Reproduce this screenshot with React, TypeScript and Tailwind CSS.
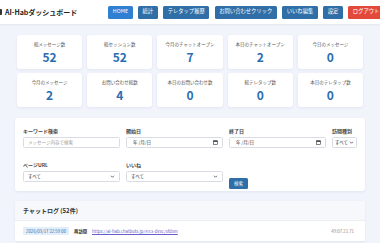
import React from 'react'

const navItems = [
  { label: 'HOME', active: true },
  { label: '統計' },
  { label: 'テレタップ履歴' },
  { label: 'お問い合わせクリック' },
  { label: 'いいね編集' },
  { label: '設定' },
]

const stats = [
  { label: '総メッセージ数', value: '52' },
  { label: '総セッション数', value: '52' },
  { label: '今月のチャットオープン', value: '7' },
  { label: '本日のチャットオープン', value: '2' },
  { label: '今日のメッセージ', value: '0' },
  { label: '今月のメッセージ', value: '2' },
  { label: 'お問い合わせ総数', value: '4' },
  { label: '本日のお問い合わせ数', value: '0' },
  { label: '総テレタップ数', value: '0' },
  { label: '本日のテレタップ数', value: '0' },
]

function Chevron() {
  return (
    <svg width="5" height="5" viewBox="0 0 10 10" className="shrink-0">
      <path d="M2 3.5 L5 6.5 L8 3.5" fill="none" stroke="#444" strokeWidth="1.6" />
    </svg>
  )
}

function CalendarIcon() {
  return (
    <svg width="5" height="5" viewBox="0 0 10 10" className="shrink-0">
      <rect x="1" y="1.5" width="8" height="7.5" fill="none" stroke="#333" strokeWidth="1.2" />
      <rect x="1" y="1.5" width="8" height="2.2" fill="#333" />
    </svg>
  )
}

function Label({ children }: { children: React.ReactNode }) {
  return <div className="text-[5px] leading-[7px] font-bold text-[#444] mb-[3px] whitespace-nowrap">{children}</div>
}

function SelectBox({ text, tight }: { text: string; tight?: boolean }) {
  return (
    <div
      className={`h-[11px] border border-[#d9dde3] rounded-[1.5px] bg-white flex items-center justify-between text-[4.5px] text-[#333] whitespace-nowrap ${
        tight ? 'px-[2px]' : 'px-[4px]'
      }`}
    >
      <span>{text}</span>
      <Chevron />
    </div>
  )
}

function DateBox() {
  return (
    <div className="h-[11px] border border-[#d9dde3] rounded-[1.5px] bg-white flex items-center justify-between px-[4px] text-[4.5px] text-[#333]">
      <span className="pl-[2px]">年 /月/日</span>
      <CalendarIcon />
    </div>
  )
}

export default function App() {
  return (
    <div className="w-[380px] h-[243px] overflow-hidden bg-[#f1f4fb] font-['Noto_Sans_CJK_JP','Noto_Sans',sans-serif]">
      <header className="h-[24px] bg-white shadow-[0_1px_2px_rgba(0,0,0,0.06)] flex items-center overflow-hidden">
        <div className="flex items-center shrink-0 -ml-[3px]">
          <span className="w-[5px] h-[6px] bg-[#333] rounded-[1px] mr-[3px]" />
          <h1 className="text-[7px] font-bold text-[#222] whitespace-nowrap">AI-Habダッシュボード</h1>
        </div>
        <nav className="flex items-center gap-[5.5px] ml-[31px] shrink-0">
          {navItems.map(item => (
            <button
              key={item.label}
              className={`h-[13px] px-[4.5px] rounded-[1.5px] text-[5.3px] text-white whitespace-nowrap ${
                item.active ? 'bg-[#2f7fd3]' : 'bg-[#2f6ea6]'
              }`}
            >
              {item.label}
            </button>
          ))}
          <button className="h-[13px] px-[4.5px] rounded-[1.5px] text-[5.3px] text-white whitespace-nowrap bg-[#e3493b]">
            ログアウト
          </button>
        </nav>
      </header>

      <main className="px-[17px] pt-[11px]">
        <div className="grid grid-cols-5 gap-x-[5px] gap-y-[4px]">
          {stats.map(s => (
            <div
              key={s.label}
              className="h-[34px] bg-white rounded-[3px] shadow-[0_1px_3px_rgba(40,60,120,0.08)] flex flex-col items-center pt-[6px]"
            >
              <div className="text-[4.5px] leading-[6px] text-[#555] whitespace-nowrap">{s.label}</div>
              <div className="text-[12px] leading-[16px] font-bold text-[#2a6db3] mt-[2px]">{s.value}</div>
            </div>
          ))}
        </div>

        <section className="mt-[11px] -mx-[2px] bg-white rounded-[3px] shadow-[0_1px_3px_rgba(40,60,120,0.08)] pl-[8px] pt-[9px] pb-[7px]">
          <div className="grid grid-cols-[97px_97px_97px_25px] gap-x-[6px] gap-y-[13px]">
            <div>
              <Label>キーワード検索</Label>
              <div className="h-[11px] border border-[#d9dde3] rounded-[1.5px] bg-white flex items-center px-[4px] text-[4.5px] text-[#999]">
                メッセージ内容で検索
              </div>
            </div>
            <div>
              <Label>開始日</Label>
              <DateBox />
            </div>
            <div>
              <Label>終了日</Label>
              <DateBox />
            </div>
            <div>
              <Label>訪問種別</Label>
              <SelectBox text="すべて" tight />
            </div>
            <div>
              <Label>ページURL</Label>
              <SelectBox text="すべて" />
            </div>
            <div>
              <Label>いいね</Label>
              <SelectBox text="すべて" />
            </div>
            <div className="flex items-end">
              <button className="h-[11px] px-[5px] rounded-[1.5px] bg-[#2f6ea6] text-white text-[4.5px] mb-[-7px]">
                検索
              </button>
            </div>
          </div>
          <div className="h-[2px]" />
        </section>

        <section className="mt-[10px] -mx-[2px] bg-white rounded-t-[3px] shadow-[0_1px_3px_rgba(40,60,120,0.08)] overflow-hidden">
          <div className="h-[20px] bg-[#f7f8fc] border-b border-[#eceef4] flex items-center px-[8px]">
            <h2 className="text-[6px] font-bold text-[#333]">チャットログ (52件)</h2>
          </div>
          <div className="h-[20px] flex items-center px-[8px] text-[4.3px]">
            <span className="bg-[#e3eefb] text-[#2f6ea6] px-[3px] py-[1px] rounded-[1px] whitespace-nowrap">
              2026/03/17 22:59:00
            </span>
            <span className="ml-[5px] text-[#333] font-bold">再訪問</span>
            <span className="ml-[5px] text-[#6a5fc8] underline whitespace-nowrap">
              https://ai-hab.chatbots.jp/#/cs-desc/sfdsm
            </span>
            <span className="ml-auto mr-[3px] text-[#888]">49:07.21.71</span>
          </div>
        </section>
      </main>
    </div>
  )
}
